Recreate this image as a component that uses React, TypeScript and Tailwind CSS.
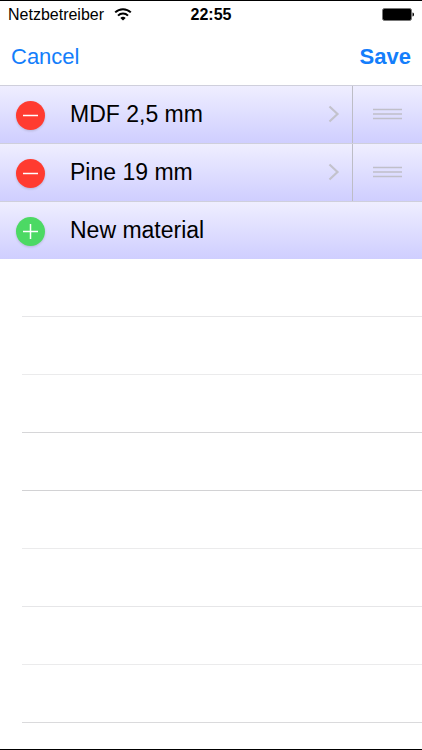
import { useState } from "react"

type Material = {
  id: number
  name: string
}

const lineColors = [
  "border-[#e6e6e8]",
  "border-[#ebebec]",
  "border-[#d6d6d8]",
  "border-[#d2d2d4]",
  "border-[#ebebec]",
  "border-[#e6e6e8]",
  "border-[#ebebec]",
  "border-[#dadadc]",
]

const rowStyle = "flex h-[58px] border-t border-[#cfcfdc] bg-linear-to-b from-[#efeeff] to-[#cfceff]"

const WifiIcon = () => (
  <svg width="18" height="14" viewBox="0 1 18 14" fill="none" stroke="black" strokeWidth="2">
    <path d="M1.2 5.4a11 11 0 0 1 15.6 0" />
    <path d="M4 8.600a7.100 7.100 0 0 1 10 0" />
    <path d="M9 13.500 6.300 11a3.900 3.900 0 0 1 5.400 0z" fill="black" stroke="none" />
  </svg>
)

const BatteryIcon = () => (
  <svg width="32" height="14" viewBox="0 0 32 14">
    <rect x="0.5" y="0.5" width="29" height="12" rx="2" fill="black" stroke="#777" strokeWidth="1" />
    <path d="M30.500 4.500c1.100.3 1.500 1 1.500 2s-.4 1.700-1.500 2z" fill="black" />
  </svg>
)

const RoundIcon = ({ plus = false }: { plus?: boolean }) => (
  <svg className="overflow-visible drop-shadow-[0_1px_1px_rgba(0,0,0,0.15)]" width="29" height="29" viewBox="0 0 29 29" stroke="white" strokeWidth="1.5">
    <circle cx="14.5" cy="14.5" r="14.5" fill={plus ? "#4cd964" : "#ff3b30"} stroke="none" />
    <path d="M7 14.5h15" />
    {plus ? <path d="M14.5 7v15" /> : null}
  </svg>
)

export default function App() {
  const [materials, setMaterials] = useState<Material[]>([
    { id: 1, name: "MDF 2,5 mm" },
    { id: 2, name: "Pine 19 mm" },
  ])

  const removeMaterial = (id: number) => {
    setMaterials(materials.filter((m) => m.id !== id))
  }

  const addMaterial = () => {
    setMaterials([...materials, { id: Date.now(), name: "New material" }])
  }

  return (
    <div className="flex min-h-screen flex-col border-y border-black bg-white font-['Liberation_Sans',Arial,sans-serif] text-black">
      <div className="grid h-7 grid-cols-3 items-center px-2 text-base">
        <div className="flex items-center gap-2.5">
          <span>Netzbetreiber</span>
          <WifiIcon />
        </div>
        <span className="text-center font-bold">22:55</span>
        <div className="flex justify-end">
          <BatteryIcon />
        </div>
      </div>

      <header className="flex h-14 items-center justify-between px-[11px] pb-0.5 text-[22px] text-[#147efb]">
        <button type="button" className="cursor-pointer">Cancel</button>
        <button type="button" className="cursor-pointer font-bold">Save</button>
      </header>

      <ul className="text-[23px]">
        {materials.map((m) => (
          <li key={m.id} className={rowStyle}>
            <button type="button" aria-label={"Delete " + m.name} onClick={() => removeMaterial(m.id)} className="flex w-[70px] cursor-pointer items-center pt-0.5 pl-4">
              <RoundIcon />
            </button>
            <button type="button" className="flex flex-1 cursor-pointer items-center justify-between pr-3 text-left">
              {m.name}
              <svg className="mb-0.5" width="12" height="18" viewBox="0 0 12 18" fill="none" stroke="#c3c2cc" strokeWidth="2.2">
                <path d="M1.5 1.5 9.5 9l-8 7.5" />
              </svg>
            </button>
            <button type="button" aria-label={"Move " + m.name} className="flex w-[70px] cursor-grab items-center justify-center border-l border-[#bdbdc6]">
              <svg className="mb-0.5" width="29" height="12" viewBox="0 0 29 12" stroke="#c0bfc9" strokeWidth="1.7">
                <path d="M0 1.5h29M0 6h29M0 10.5h29" />
              </svg>
            </button>
          </li>
        ))}
        <li className={rowStyle}>
          <button type="button" onClick={addMaterial} className="flex flex-1 cursor-pointer items-center text-left">
            <span className="w-[70px] pt-0.5 pl-4">
              <RoundIcon plus />
            </span>
            New material
          </button>
        </li>
      </ul>

      <div className="flex-1 pl-[22px]">
        {lineColors.map((color, i) => (
          <div key={i} className={"h-[58px] border-b " + color} />
        ))}
      </div>
    </div>
  )
}
